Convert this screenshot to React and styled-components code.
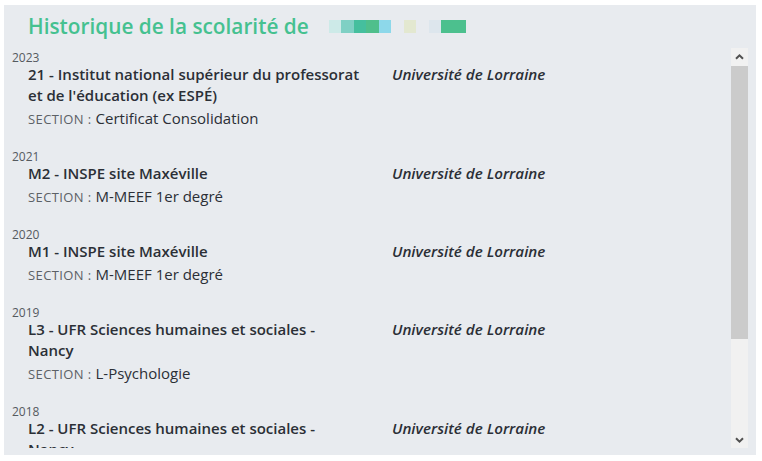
import React from 'react'
import styled, { createGlobalStyle } from 'styled-components'

const GlobalStyle = createGlobalStyle`
  html, body {
    margin: 0;
    padding: 0;
    background: #ffffff;
    font-family: "Open Sans", "Noto Sans", sans-serif;
  }
`

const entries = [
  {
    year: '2023',
    title: "21 - Institut national supérieur du professorat et de l'éducation (ex ESPÉ)",
    school: 'Université de Lorraine',
    section: 'Certificat Consolidation',
  },
  {
    year: '2021',
    title: 'M2 - INSPE site Maxéville',
    school: 'Université de Lorraine',
    section: 'M-MEEF 1er degré',
  },
  {
    year: '2020',
    title: 'M1 - INSPE site Maxéville',
    school: 'Université de Lorraine',
    section: 'M-MEEF 1er degré',
  },
  {
    year: '2019',
    title: 'L3 - UFR Sciences humaines et sociales - Nancy',
    school: 'Université de Lorraine',
    section: 'L-Psychologie',
  },
  {
    year: '2018',
    title: 'L2 - UFR Sciences humaines et sociales - Nancy',
    school: 'Université de Lorraine',
    section: 'L-Psychologie',
  },
  {
    year: '2017',
    title: 'L1 - UFR Sciences humaines et sociales - Nancy',
    school: 'Université de Lorraine',
    section: 'L-Psychologie',
  },
]

// pixelated (blurred) name after the title
const nameBlocks = [
  '#cdeae8', '#7fd0c4', '#45bf9e', '#4fbf8c', '#8dd8ea',
  'transparent', '#e3e8d0', 'transparent', '#dde6ed', '#4cc08e', '#4cc08e',
]

const Chevron = ({ down }) => (
  <svg width="9" height="6" viewBox="0 0 9 6">
    <path
      d={down ? 'M1 1.2 L4.5 4.6 L8 1.2' : 'M1 4.8 L4.5 1.4 L8 4.8'}
      fill="none"
      stroke="#505050"
      strokeWidth="2"
    />
  </svg>
)

const App = () => {
  return (
    <>
      <GlobalStyle />
      <Panel>
        <Header>
          <Title>Historique de la scolarité de</Title>
          <Hidden>
            {nameBlocks.map((c, i) => (
              <Pixel key={i} $color={c} />
            ))}
          </Hidden>
        </Header>
        <Body>
          <List>
            {entries.map((e) => (
              <Entry key={e.year}>
                <Year>{e.year}</Year>
                <Row>
                  <div>
                    <EntryTitle>{e.title}</EntryTitle>
                    <Section>
                      <Label>Section :</Label> {e.section}
                    </Section>
                  </div>
                  <School>{e.school}</School>
                </Row>
              </Entry>
            ))}
          </List>
          <Scrollbar>
            <ScrollButton>
              <Chevron />
            </ScrollButton>
            <Track>
              <Thumb />
            </Track>
            <ScrollButton>
              <Chevron down />
            </ScrollButton>
          </Scrollbar>
        </Body>
      </Panel>
    </>
  )
}

export default App

const Panel = styled.div`
  margin: 5px 0 0 4px;
  width: 752px;
  height: 450px;
  box-sizing: border-box;
  padding: 0 8px 7px 8px;
  background: #e8ebef;
  display: flex;
  flex-direction: column;
`

const Header = styled.div`
  height: 43px;
  flex-shrink: 0;
  display: flex;
  align-items: center;
  padding-left: 16px;
  gap: 20px;
`

const Title = styled.h1`
  margin: 0;
  font-size: 20.8px;
  font-weight: 600;
  color: #45c190;
  line-height: 30px;
  padding-bottom: 2px;
`

const Hidden = styled.div`
  display: flex;
`

const Pixel = styled.span`
  width: 12.5px;
  height: 13px;
  background: ${(p) => p.$color};
`

const Body = styled.div`
  flex: 1;
  min-height: 0;
  display: flex;
`

const List = styled.div`
  flex: 1;
  min-width: 0;
  overflow: hidden;
  padding-top: 3px;
`

const Scrollbar = styled.div`
  width: 17px;
  flex-shrink: 0;
  display: flex;
  flex-direction: column;
  background: #f1f1f1;
`

const ScrollButton = styled.div`
  height: 17px;
  flex-shrink: 0;
  display: flex;
  align-items: center;
  justify-content: center;
`

const Track = styled.div`
  flex: 1;
  padding-top: 1px;
`

const Thumb = styled.div`
  height: 273px;
  background: #cbcbcb;
`

const Entry = styled.div`
  margin-bottom: 21px;
`

const Year = styled.div`
  font-size: 12px;
  line-height: 13px;
  color: #555a5f;
`

const Row = styled.div`
  display: grid;
  grid-template-columns: 364px 1fr;
  padding-left: 16px;
`

const EntryTitle = styled.div`
  max-width: 334px;
  font-size: 15px;
  font-weight: 600;
  line-height: 21px;
  color: #2b2f36;
`

const Section = styled.div`
  margin-top: 2px;
  font-size: 15px;
  line-height: 20px;
  color: #2b2f36;
`

const Label = styled.span`
  font-size: 13px;
  letter-spacing: 0.4px;
  text-transform: uppercase;
  color: #5c6166;
`

const School = styled.div`
  font-size: 15.2px;
  font-weight: 600;
  font-style: italic;
  line-height: 21px;
  color: #2b2f36;
`
